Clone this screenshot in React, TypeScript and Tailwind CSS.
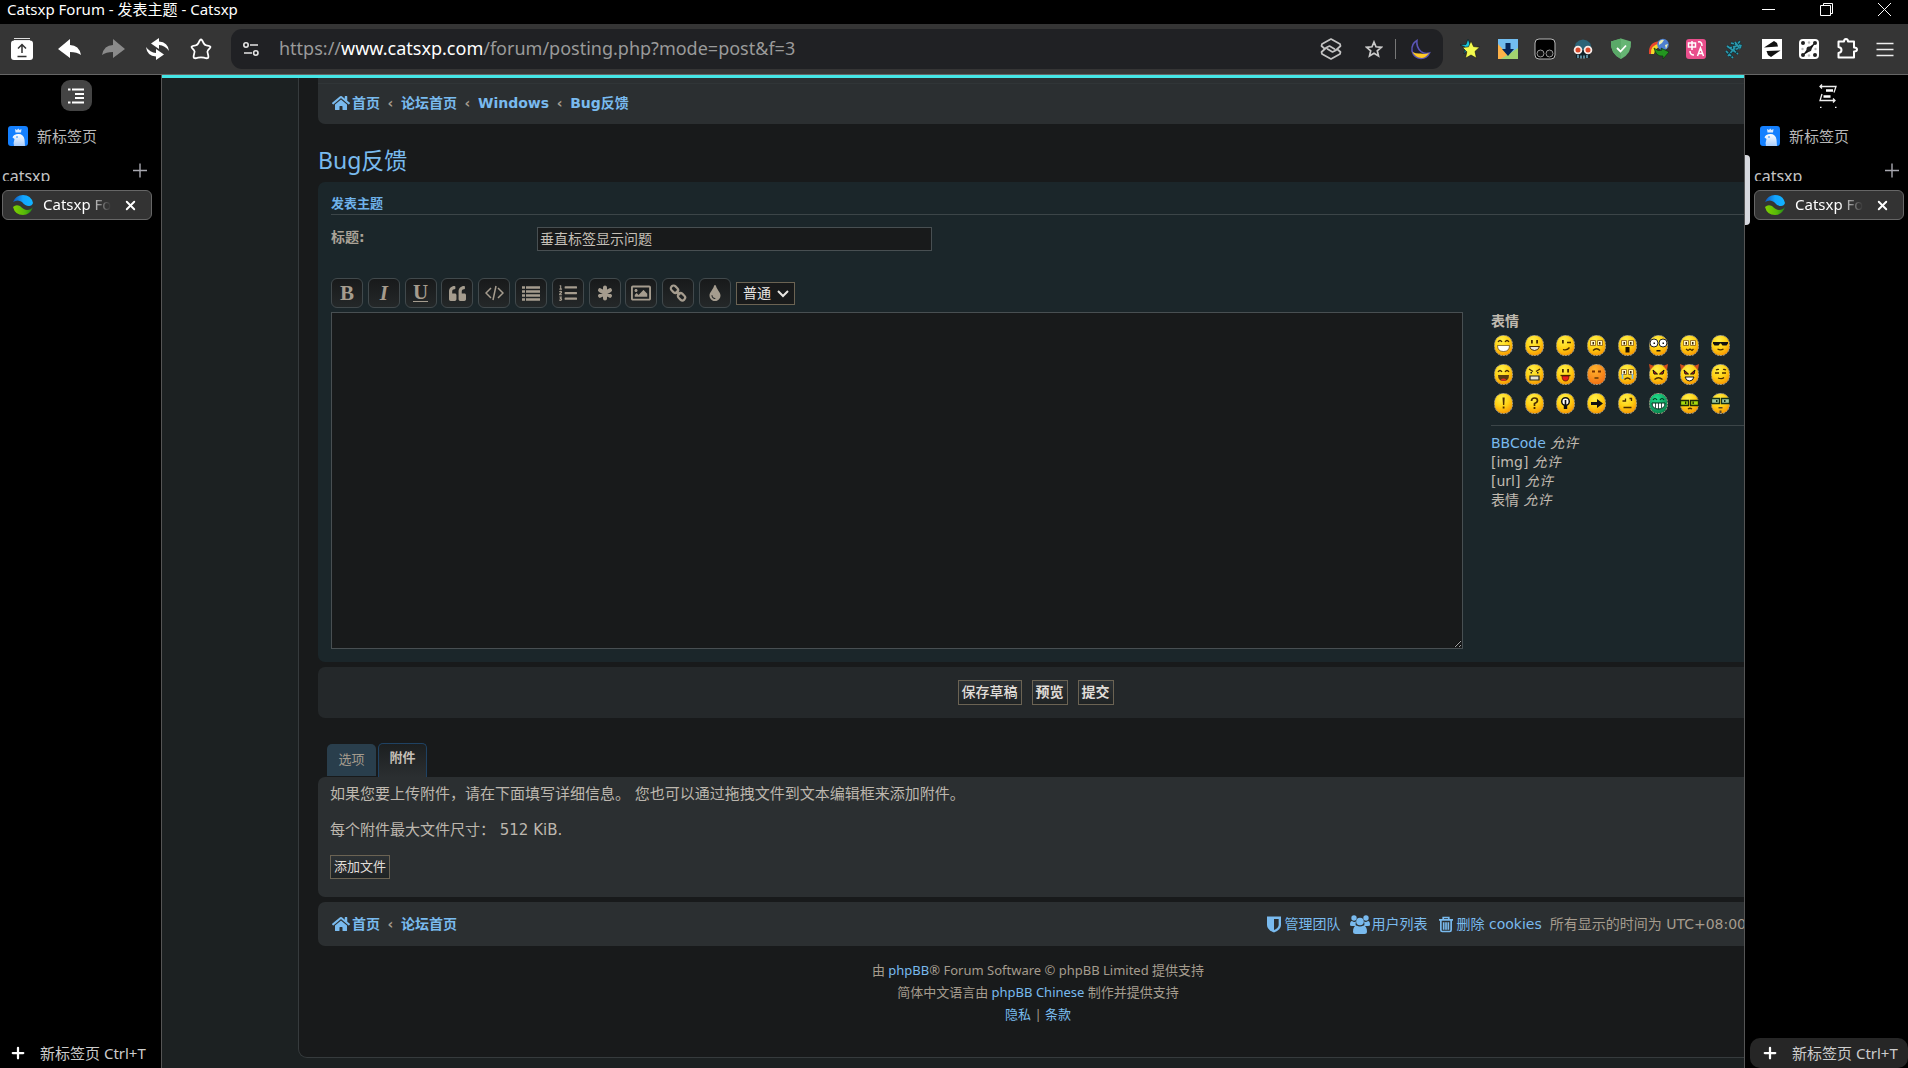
import type { ReactNode } from 'react'
import { Plus, X } from 'lucide-react'
import { FaHome, FaListOl, FaQuoteLeft, FaRegImage, FaTint } from 'react-icons/fa'

type SmileyKind =
    | 'grin' | 'smile' | 'wink' | 'sad' | 'surprised' | 'shock' | 'confused' | 'cool'
    | 'laugh' | 'mad' | 'razz' | 'blush' | 'cry' | 'evil' | 'twisted' | 'roll'
    | 'exclaim' | 'question' | 'idea' | 'arrow' | 'neutral' | 'green' | 'geek' | 'ugeek'

const smileyRows: SmileyKind[][] = [
    ['grin', 'smile', 'wink', 'sad', 'surprised', 'shock', 'confused', 'cool'],
    ['laugh', 'mad', 'razz', 'blush', 'cry', 'evil', 'twisted', 'roll'],
    ['exclaim', 'question', 'idea', 'arrow', 'neutral', 'green', 'geek', 'ugeek'],
]

const line = { fill: 'none', stroke: '#4a2c00', strokeWidth: 1.3 }
const whiteEyes = (
    <>
        <path d="M3.5 5.5h5v5h-5zM10.5 5.5h5v5h-5z" fill="#fff6c8" stroke="#8a5a10" strokeWidth=".8" />
        <path d="M5.5 7h1.5v2.5H5.5zM12 7h1.5v2.5H12z" fill="#3a2400" />
    </>
)
const dotEyes = <path d="M6 5h1.800v3.500H6zM11.200 5H13v3.500h-1.800z" fill="#4a2c00" />

const smileyFaces: Record<SmileyKind, ReactNode> = {
    grin: (
        <>
            <path d="M4 7q2-3 4 0M11 7q2-3 4 0" {...line} />
            <path d="M3.5 10.500h12q0 6-6 6t-6-6z" fill="#fff" stroke="#4a2c00" strokeWidth=".6" />
        </>
    ),
    smile: (
        <>
            {dotEyes}
            <path d="M4.5 11.5h10q-1 4-5 4t-5-4z" fill="#e9e4d4" stroke="#4a2c00" />
        </>
    ),
    wink: (
        <>
            <path d="M6 5h1.800v3.500H6z" fill="#4a2c00" />
            <path d="M11 7.5h4M7 14.500q4 1.500 6.500-2" {...line} />
        </>
    ),
    sad: (
        <>
            {whiteEyes}
            <path d="M6 15.500q3.500-3.500 7 0" {...line} />
        </>
    ),
    surprised: (
        <>
            {whiteEyes}
            <path d="M7.500 12h4v5.500h-4z" fill="#1a0f00" />
        </>
    ),
    shock: (
        <>
            <circle cx="5" cy="8" r="4" fill="#fff" stroke="#222" />
            <circle cx="14" cy="8" r="4" fill="#fff" stroke="#222" />
            <path d="M4.500 7.500h1.500v1.500H4.500zM13.500 7.500H15V9h-1.500zM7.500 15h4v1.500h-4z" fill="#111" />
        </>
    ),
    confused: (
        <>
            {whiteEyes}
            <path d="M6 14l2 1.500 2-1.500 2 1.500 1.500-1.500" {...line} />
        </>
    ),
    cool: (
        <>
            <path d="M2 7h15v1.500l-1.500 2h-4L10 8.500H9l-1.500 2h-4L2 8.500z" fill="#111" />
            <path d="M6.500 14q3 1.800 6 0" {...line} />
        </>
    ),
    laugh: (
        <>
            <path d="M4 8q2-3 4 0M11 8q2-3 4 0" {...line} />
            <path d="M4 11h11q0 6-5.500 6T4 11z" fill="#5a3a10" />
            <path d="M7 15.500q2.500-2 5 0v1.200H7z" fill="#e23020" />
        </>
    ),
    mad: (
        <>
            <path d="M4 5l4 2.500M15 5l-4 2.500" {...line} />
            <path d="M5.500 8h1.500v1.500H5.500zM12 8h1.500v1.500H12z" fill="#222" />
            <path d="M5 12h9v4H5z" fill="#e9e4d4" stroke="#222" strokeWidth="1.2" />
        </>
    ),
    razz: (
        <>
            {dotEyes}
            <path d="M4.500 11.500h10" {...line} />
            <path d="M6 12h7q0 5-3.500 5T6 12z" fill="#e8201a" stroke="#4a0c00" strokeWidth=".7" />
        </>
    ),
    blush: (
        <>
            <path d="M5 6.500h3v2H5zM11 6.500h3v2h-3z" fill="#7a3200" />
            <path d="M7.500 14h4" {...line} />
        </>
    ),
    cry: (
        <>
            {whiteEyes}
            <path d="M4.500 10v5M14.500 10v5" stroke="#79b7e8" strokeWidth="1.600" />
            <path d="M6.500 15.500q3-3 6 0" {...line} />
        </>
    ),
    evil: (
        <>
            <path d="M0 0l5 2-4 4zM19 0l-5 2 4 4z" fill="#d0501c" />
            <path d="M4 6l4.500 4H5zM15 6l-4.500 4H14z" fill="#d01010" stroke="#111" />
            <path d="M5.500 15.500q4-3.500 8 0" {...line} />
        </>
    ),
    twisted: (
        <>
            <path d="M0 0l5 2-4 4zM19 0l-5 2 4 4z" fill="#d0501c" />
            <path d="M4 6l4.500 4H5zM15 6l-4.500 4H14z" fill="#d01010" stroke="#111" />
            <path d="M5 13h9q-1 4-4.500 4T5 13z" fill="#fff" stroke="#111" />
        </>
    ),
    roll: <path d="M4 9h4M11 9h4M5 6q1.500-1 3-.500M12 5.500q1.500-.500 3 .500M7 14q4 1.500 6-.500" {...line} />,
    exclaim: <path d="M8.500 4.500h2.200L10.300 12H9zM8.700 13.500h1.800v2H8.700z" fill="#4a2c00" />,
    question: (
        <>
            <path d="M6.500 8q0-3 3-3t3 2.500q0 2-3 3V13" {...line} strokeWidth="1.700" />
            <path d="M8.600 14h1.800v2H8.600z" fill="#4a2c00" />
        </>
    ),
    idea: (
        <>
            <circle cx="9.500" cy="8.500" r="3.800" fill="#fff" stroke="#111" strokeWidth="1.500" />
            <path d="M8.700 7h1.600v6H8.700zM7.800 12h3.400v4H7.800z" fill="#111" />
        </>
    ),
    arrow: <path d="M4 9h6V6l6 4.500-6 4.500v-3H4z" fill="#111" />,
    neutral: <path d="M4.500 8h3V5.500M11.500 5.500h2V8M5.500 14.500h8" {...line} />,
    green: (
        <>
            <path d="M4 7q2-3 4 0M11 7q2-3 4 0" fill="none" stroke="#03301c" strokeWidth="1.200" />
            <path d="M3 10h13q0 6-6.500 6T3 10z" fill="#fff" stroke="#03301c" />
            <path d="M6.500 10v5M9.500 10v6M12.500 10v5" stroke="#03301c" strokeWidth=".8" />
        </>
    ),
    geek: (
        <>
            <path d="M.5 7.500h8v5h-8zM10.500 7.500h8v5h-8z" fill="#a6d80e" stroke="#1d2b05" strokeWidth="1.300" />
            <path d="M5 8.500h1.300V11H5zM12.500 8.500h1.300V11h-1.300z" fill="#1d2b05" />
            <path d="M8 16q2-1.500 4 0" {...line} />
        </>
    ),
    ugeek: (
        <>
            <path d="M.5 5.500h8v5h-8zM10.500 5.500h8v5h-8z" fill="#9cc8a0" stroke="#123018" strokeWidth="1.300" />
            <path d="M5 7h1.500v2H5zM13 7h1.500v2H13z" fill="#123018" />
            <path d="M7.500 14h4v1.500h-4zM8.500 17.500h2V20h-2z" fill="#5b4626" />
        </>
    ),
}

function Smiley({ kind }: { kind: SmileyKind }) {
    const fill = kind === 'green' ? 'url(#faceGreen)' : kind === 'blush' ? 'url(#faceOrange)' : 'url(#faceYellow)'
    return (
        <svg width="19" height="21" viewBox="0 0 19 21">
            <rect x=".5" y=".5" width="18" height="20" rx="8" ry="9" fill={fill} stroke="#a39c84" strokeDasharray="2 1" />
            {smileyFaces[kind]}
        </svg>
    )
}

function SharedGradients() {
    return (
        <svg width="0" height="0" className="absolute">
            <defs>
                <radialGradient id="faceYellow" cx=".4" cy=".25" r=".85">
                    <stop offset="0" stopColor="#fff04a" />
                    <stop offset=".5" stopColor="#ffd013" />
                    <stop offset="1" stopColor="#f58a00" />
                </radialGradient>
                <radialGradient id="faceOrange" cx=".4" cy=".25" r=".85">
                    <stop offset="0" stopColor="#ffb52e" />
                    <stop offset="1" stopColor="#f26a10" />
                </radialGradient>
                <radialGradient id="faceGreen" cx=".4" cy=".25" r=".85">
                    <stop offset="0" stopColor="#1fe08c" />
                    <stop offset="1" stopColor="#067a46" />
                </radialGradient>
                <linearGradient id="logoBlue" x1="0" x2="1">
                    <stop offset="0" stopColor="#1256b8" />
                    <stop offset=".5" stopColor="#12a4ff" />
                    <stop offset="1" stopColor="#12b4ff" />
                </linearGradient>
                <linearGradient id="logoGreen" x1="0" x2="1">
                    <stop offset="0" stopColor="#7fd000" />
                    <stop offset=".6" stopColor="#56b80a" />
                    <stop offset="1" stopColor="#1f8a1a" />
                </linearGradient>
                <linearGradient id="birdBody" x1="0" y1="0" x2="0" y2="1">
                    <stop offset="0" stopColor="#fff" />
                    <stop offset="1" stopColor="#a9cdfc" />
                </linearGradient>
            </defs>
        </svg>
    )
}

const extensions: { name: string; icon: ReactNode }[] = [
    {
        name: 'Bookmarks',
        icon: (
            <>
                <path d="M9 1l2.500 6.500L5 16l1-7L1 7l6-.500z" fill="#19c5dc" stroke="#111" strokeWidth=".6" />
                <path d="M12 3l2.600 5.600 6 .6-4.600 4.200 1.500 6.800L12 17l-5.500 3.200 1.300-6.400L3.500 9.500l6-.700z" fill="#f4fb4e" stroke="#111" strokeWidth=".6" />
            </>
        ),
    },
    {
        name: 'Downloads',
        icon: (
            <>
                <path d="M1 1h20v20H1z" fill="#72bdf0" />
                <path d="M1 6v15h3l7-4z" fill="#fdb249" />
                <path d="M21 10v11H4l8-5z" fill="#a3d36f" />
                <path d="M8.500 5h5v6H17l-6 7-6-7h3.500z" fill="#06265a" />
            </>
        ),
    },
    {
        name: 'Scripts',
        icon: (
            <>
                <rect x="1" y="1" width="20" height="20" rx="4" fill="#000" stroke="#b8b8b8" />
                <circle cx="6.500" cy="15.500" r="3.500" fill="#111" stroke="#9a9a9a" />
                <circle cx="15.500" cy="15.500" r="3.500" fill="#111" stroke="#9a9a9a" />
            </>
        ),
    },
    {
        name: 'Reader',
        icon: (
            <>
                <path d="M2.500 13q-.500-11 8.500-11.500Q20 2 19.500 13z" fill="#2c6478" />
                <path d="M4 12h14v8H4z" fill="#10212a" />
                <path d="M6 20v-3M9 20.500v-3M12 20.500v-3M15 20v-3" stroke="#8fd0e8" strokeWidth="1.200" />
                <circle cx="6" cy="12" r="3.400" fill="#d8482a" stroke="#f6ece8" strokeWidth="1.800" />
                <circle cx="16" cy="12" r="3.400" fill="#d8482a" stroke="#f6ece8" strokeWidth="1.800" />
            </>
        ),
    },
    {
        name: 'Ad blocker',
        icon: (
            <>
                <path d="M11 .5l10 3q1 12-10 17.500Q0 15.500 1 3.500z" fill="#66b574" />
                <path d="M11 .5v20.500Q0 15.500 1 3.500z" fill="#5aa968" />
                <path d="M7 10l3.500 3.500L16 7.500" fill="none" stroke="#fff" strokeWidth="1.800" />
            </>
        ),
    },
    {
        name: 'Download manager',
        icon: (
            <>
                <path d="M1 16Q0 4 12 3v3Q4 7 4 16z" fill="#e8442c" />
                <path d="M3 16Q2 7 12 5.500V9q-5 1-6 7z" fill="#f6d82a" />
                <circle cx="15" cy="6.500" r="5.800" fill="#4d7fd0" />
                <path d="M11 4q2-3 5-2l-2 3-3 2zM17 7l3-1-2 5z" fill="#e9eeb4" />
                <path d="M6 10q4 4 8 2l-1-2 8 4-6 7v-3q-7 1-9-8z" fill="#23951f" stroke="#0d3a0c" strokeWidth=".7" />
            </>
        ),
    },
    {
        name: 'Translate',
        icon: (
            <>
                <rect x="1" y="1" width="20" height="20" rx="3" fill="#e94f8c" />
                <path d="M3.500 5h7v4h-7zM7 3v9M13 4q4-1 4 4M5 13q0 4 4 4M12.500 18l3-8 3 8M13.500 15.500h4" fill="none" stroke="#fff" strokeWidth="1.500" />
            </>
        ),
    },
    {
        name: 'Inspector',
        icon: (
            <>
                <path d="M4 8l11 8M8 5l11 3M3 13l7 7M12 4l5 7M5 18l12-15M9 13l9-4M6 10l8-2" fill="none" stroke="#14343c" strokeWidth="3" />
                <path d="M4 8l11 8M8 5l11 3M3 13l7 7M12 4l5 7M5 18l12-15M9 13l9-4M6 10l8-2" fill="none" stroke="#2a9bb0" strokeWidth="1.600" strokeDasharray="3 1" />
            </>
        ),
    },
    {
        name: 'Swap',
        icon: (
            <>
                <path d="M1 1h20v20H1z" fill="#fff" />
                <path d="M3 9.500l10-6.500 3 2 1 3.500zM5.500 13l14-.500-9.500 6.500-3-2z" fill="#111" />
            </>
        ),
    },
    {
        name: 'Dice',
        icon: (
            <>
                <rect x="1" y="1" width="20" height="20" rx="4" fill="#fff" />
                <path d="M4 18l6-8 8-6-6 9z" fill="#111" />
                <g fill="#222">
                    <circle cx="5" cy="5" r="2" /><circle cx="17" cy="5" r="2" />
                    <circle cx="11" cy="11" r="2.500" /><circle cx="5" cy="17" r="2" /><circle cx="17" cy="17" r="2" />
                </g>
                <g fill="#bbb">
                    <circle cx="11" cy="4.500" r="1.200" /><circle cx="4.500" cy="11" r="1.200" />
                    <circle cx="17.500" cy="11" r="1.200" /><circle cx="11" cy="17.500" r="1.200" />
                </g>
            </>
        ),
    },
    {
        name: 'Extensions',
        icon: (
            <path d="M2.500 3.500H8q0-2.500 2-2.500t2 2.500h6v6q3 0 3 2t-3 2v6H2.500V15q3-.500 3-3t-3-3z" fill="none" stroke="#fff" strokeWidth="2" strokeLinejoin="round" />
        ),
    },
    {
        name: 'Menu',
        icon: <path d="M2.500 5.500h17M2.500 11.500h17M2.500 17.500h17" stroke="#eee" strokeWidth="1.500" />,
    },
]

function TitleBar() {
    return (
        <header className="flex h-6 shrink-0 items-start justify-between pl-[7px] pr-4 text-[15px] leading-[18px] text-white">
            <h1>Catsxp Forum - 发表主题 - Catsxp</h1>
            <div className="flex items-center gap-[43px] pt-[2px]">
                <button aria-label="Minimize"><svg width="15" height="15"><path d="M1 7.500h13" stroke="#fff" /></svg></button>
                <button aria-label="Restore">
                    <svg width="15" height="15" fill="none" stroke="#fff"><path d="M1.500 3.500h10v10h-10zM4.500 3.500v-2h9v10h-2" /></svg>
                </button>
                <button aria-label="Close"><svg width="15" height="15"><path d="M1 1l13 13M14 1L1 14" stroke="#fff" /></svg></button>
            </div>
        </header>
    )
}

function Toolbar() {
    return (
        <div className="flex h-[51px] shrink-0 items-center border-b border-[#666] bg-[#353535] text-white">
            <div className="flex w-[231px] shrink-0 items-center gap-[21px] pl-[11px]">
                <button aria-label="Open sidebar" className="mr-1">
                    <svg width="22" height="22" viewBox="0 0 22 22">
                        <path d="M3 0h16v3H3z" fill="#ddd" />
                        <path d="M3 1.500h16" stroke="#353535" />
                        <rect y="2.500" width="22" height="19.500" rx="3" fill="#fff" />
                        <path d="M11 15V7M7 10.500l4-4 4 4M6.500 18.500h9" fill="none" stroke="#333" strokeWidth="1.500" />
                    </svg>
                </button>
                <button aria-label="Back">
                    <svg width="23" height="22" viewBox="0 0 23 22" fill="#fff">
                        <path d="M0 11L12 1v6q9 0 11 10-4-3-11-3v6z" />
                    </svg>
                </button>
                <button aria-label="Forward">
                    <svg width="23" height="22" viewBox="0 0 23 22" fill="#8a8a8a">
                        <path d="M23 11L11 1v6Q2 7 0 17q4-3 11-3v6z" />
                    </svg>
                </button>
                <button aria-label="Reload">
                    <svg width="23" height="22" viewBox="0 0 23 22" fill="#fff">
                        <path d="M23 13Q22 4 13 3.500V0L5 5.500l8 5.500V7q6 .500 10 6z" />
                        <path d="M0 9q1 9 10 9.500V22l8-5.500-8-5.500v4q-6-.500-10-6z" />
                    </svg>
                </button>
                <button aria-label="Favorites">
                    <svg width="22" height="22" viewBox="0 0 22 22" fill="none" stroke="#fff" strokeWidth="1.800" strokeLinejoin="round">
                        <path d="M11 1.500q1 0 2.500 3.500 1 2 3 2.300 4 .500 4 1.700 0 .8-2.600 3.300-1 1 0 3.700 1 3.500 0 4-1 .600-4-.300-2.900-.800-5.800 0-3 .900-4 .300-1-.5 0-4 1-2.700 0-3.700Q1.500 9.800 1.500 9q0-1.200 4-1.700 2-.300 3-2.300Q10 1.500 11 1.500z" />
                    </svg>
                </button>
            </div>

            <div className="flex h-10 min-w-0 flex-1 items-center rounded-[11px] bg-[#202124]">
                <button aria-label="Site information" className="ml-3">
                    <svg width="16" height="16" viewBox="0 0 16 16" fill="none" stroke="#e4e4e4" strokeWidth="1.600">
                        <circle cx="3" cy="4" r="2.200" /><path d="M7 4h8M1 12h8" /><circle cx="12.800" cy="12" r="2.200" />
                    </svg>
                </button>
                <a href="#" className="ml-5 flex-1 truncate pb-[2px] text-[18px] leading-7 text-[#9a9a9a]">
                    https://<span className="text-white">www.catsxp.com</span>/forum/posting.php?mode=post&amp;f=3
                </a>
                <button aria-label="Layers">
                    <svg width="22" height="22" viewBox="0 0 22 22" fill="none" stroke="#c4c4c4" strokeWidth="1.700" strokeLinejoin="round" strokeLinecap="round">
                        <path d="M5 11L1.500 8 2 6l9-5 9 5 .500 2-5 4.500-3 1.500-5-3M17 11l3.500 3-.500 2-9 5-9-5-.500-2 5-4.500 3-1.500 5 3" />
                    </svg>
                </button>
                <button aria-label="Bookmark this page" className="ml-[23px]">
                    <svg width="18" height="18" viewBox="0 0 18 18" fill="none" stroke="#c9c9c9" strokeWidth="1.700">
                        <path d="M9 2l2 4.800 5.300.5-4 3.500 1.200 5.200L9 13.200 4.500 16l1.200-5.200-4-3.500L7 6.800z" />
                    </svg>
                </button>
                <span className="ml-3 h-5 w-px bg-[#777]" />
                <button aria-label="Dark mode" className="ml-[14px] mr-3">
                    <svg width="21" height="21" viewBox="0 0 21 21">
                        <path d="M7 1.500Q1 5 2 12q2 7 9 7.500 6 0 8.500-5.500-5 1.500-8.500-1.500Q6 8 7 1.500z" fill="#1f2033" stroke="#5b55b8" strokeWidth="1.500" />
                        <path d="M2.500 13q4 2 8 1.500 4.500 1 8.500-.500-3 5-7.500 5-6.500-.500-9-6z" fill="#ffc928" />
                    </svg>
                </button>
            </div>

            <div className="flex w-[465px] shrink-0 items-center justify-between pl-4 pr-3">
                {extensions.map(e => (
                    <button key={e.name} aria-label={e.name} title={e.name}>
                        <svg width="22" height="22" viewBox="0 0 22 22">{e.icon}</svg>
                    </button>
                ))}
            </div>
        </div>
    )
}

function SideTabs({ modeIcon }: { modeIcon: ReactNode }) {
    return (
        <div className="flex h-full w-[152px] flex-col">
            <div className="flex justify-center pt-[5px]">{modeIcon}</div>
            <a href="#" className="mt-[15px] flex h-5 items-center gap-[9px] pl-2 text-[15px] text-[#b9b9b9]">
                <svg width="20" height="20" viewBox="0 0 20 20">
                    <rect width="20" height="20" rx="3" fill="#1480ff" />
                    <path d="M7 3l2 1 1.200-1.500L11.500 4l2-1-.500 3.500H7.500z" fill="#dcebff" />
                    <path d="M4.500 11.500q1-3.500 6-3.500t6 5.500l.500 6.500H6q-1-3 .5-7z" fill="url(#birdBody)" />
                    <circle cx="9" cy="11" r=".8" fill="#1480ff" />
                </svg>
                新标签页
            </a>
            <div className="mt-[15px] flex h-5 items-start justify-between pl-[2px] pr-1 text-[#c4c4c4]">
                {/* the group name is cut by the row below it */}
                <span className="mt-[3px] h-[17px] overflow-hidden text-base leading-6">catsxp</span>
                <button aria-label="New tab in group">
                    <svg width="16" height="18" viewBox="0 0 16 18"><path d="M8 2.500v14M1 9.500h14" stroke="#a8a8b0" strokeWidth="1.400" /></svg>
                </button>
            </div>
            <div className="ml-[2px] mt-[9px] flex h-[30px] items-center rounded-md border border-[#666] bg-[#333] pl-[10px] text-[15px] text-white">
                <svg width="20" height="20" viewBox="0 0 20 20" className="shrink-0">
                    <path d="M0 7Q3 0 10 0q8 0 10 8-1 3-4 3-4 0-7-4Q5 4 0 7z" fill="url(#logoBlue)" />
                    <path d="M0 12q3-3 7-1 4 4 7 4 4 0 6-3-3 8-10 8-8-0-10-8z" fill="url(#logoGreen)" />
                </svg>
                <a href="#" className="ml-[10px] w-[68px] overflow-hidden whitespace-nowrap pb-[2px] [mask-image:linear-gradient(to_right,#000_65%,transparent)]">Catsxp Forum</a>
                <button aria-label="Close tab" className="ml-3"><X size={15} strokeWidth={3} /></button>
            </div>
        </div>
    )
}

const treeIcon = (
    <button aria-label="Vertical tabs" className="flex size-[31px] items-center justify-center rounded-[9px] bg-[#444]">
        <svg width="16" height="16" viewBox="0 0 16 16" stroke="#fff" strokeWidth="2">
            <path d="M0 1.500h2.500M4 1.500h12M7 6h9M7 10h9M0 14.500h2.500M4 14.500h12" />
        </svg>
    </button>
)

const swapIcon = (
    <button aria-label="Switch tab side" className="flex size-[31px] items-center justify-center">
        <svg width="18" height="25" viewBox="0 0 18 25" fill="none" stroke="#eee" strokeWidth="1.300">
            <path d="M1 3.500h16l-2 6M3 1.500l-2 2 2 2M3 11l-2 6.500h15M14 15.500l2 2-2 2" />
            <path d="M7 7.500h7M4.500 13.500h7" stroke="#fff" strokeWidth="2.500" />
            <path d="M1 24.500h1.500M16 24.500h1.500" />
        </svg>
    </button>
)

function NewTabButton({ raised }: { raised?: boolean }) {
    return (
        <button className={raised
            ? 'mt-auto flex h-[30px] items-center gap-[13px] rounded-[10px] bg-[#262626] pl-[11px] text-[15px] text-[#ccc]'
            : 'mt-auto flex h-[30px] items-center gap-[13px] pl-[9px] text-[15px] text-[#ccc]'}
        >
            <Plus size={18} strokeWidth={3} className="text-white" />
            新标签页 Ctrl+T
        </button>
    )
}

function Breadcrumbs({ items }: { items: string[] }) {
    return (
        <ul className="flex items-center font-bold text-[#79baee]">
            {items.map((label, i) => (
                <li key={label} className="flex items-center">
                    {i > 0 && <span className="w-[21px] text-center text-[#a59c8e]">‹</span>}
                    <a href="#" className="flex items-center gap-[2px]">
                        {i === 0 && <FaHome size={18} />}
                        {label}
                    </a>
                </li>
            ))}
        </ul>
    )
}

const formatButtons: { name: string; icon: ReactNode }[] = [
    { name: '粗体', icon: <span className="font-bold">B</span> },
    { name: '斜体', icon: <span className="font-bold italic">I</span> },
    { name: '下划线', icon: <span className="border-b border-[#a59c8e] font-bold leading-[17px]">U</span> },
    { name: '引用', icon: <FaQuoteLeft size={17} /> },
    {
        name: '代码',
        icon: (
            <svg width="19" height="16" viewBox="0 0 19 16" fill="none" stroke="currentColor" strokeWidth="1.500">
                <path d="M6 3L1 8l5 5M13 3l5 5-5 5M11 1L8 15" />
            </svg>
        ),
    },
    {
        name: '列表',
        icon: (
            <svg width="18" height="15" viewBox="0 0 18 15" stroke="currentColor" strokeWidth="2.500">
                <path d="M0 1.500h3M4 1.500h14M0 5.500h3M4 5.500h14M0 9.500h3M4 9.500h14M0 13.500h3M4 13.500h14" />
            </svg>
        ),
    },
    { name: '编号列表', icon: <FaListOl size={18} /> },
    {
        name: '列表项',
        icon: (
            <svg width="16" height="16" viewBox="0 0 16 16" stroke="currentColor" strokeWidth="4" strokeLinecap="round">
                <path d="M8 2.500v11M3 5.200l10 5.600M13 5.200L3 10.800" />
            </svg>
        ),
    },
    { name: '图片', icon: <FaRegImage size={20} /> },
    {
        name: '链接',
        icon: (
            <svg width="18" height="18" viewBox="0 0 18 18" fill="none" stroke="currentColor" strokeWidth="2.200">
                <rect x="1.500" y="2.500" width="8" height="5.500" rx="2.700" transform="rotate(45 5.500 5.200)" />
                <rect x="8.500" y="10" width="8" height="5.500" rx="2.700" transform="rotate(45 12.500 12.700)" />
                <path d="M7 7l4 4" />
            </svg>
        ),
    },
    { name: '颜色', icon: <FaTint size={16} /> },
]

const formButton = 'border border-[#6b6353] bg-linear-to-b from-[#2d3235] to-[#1f2324] px-[3px] text-[#e0ddd8]'

function PostingPanel() {
    return (
        <section className="rounded-[7px] bg-[#1b262a] px-[13px] pb-[13px] pt-3">
            <h3 className="border-b border-[#3c4548] text-[13px] font-bold leading-5 text-[#6fb2ea]">发表主题</h3>
            <div className="mt-3 flex">
                <label htmlFor="subject" className="w-[206px] font-bold leading-5 text-[#aaa297]">标题:</label>
                <input
                    id="subject"
                    defaultValue="垂直标签显示问题"
                    className="h-6 w-[395px] border border-[#484f52] bg-[#181a1b] px-[2px] pb-[2px] text-[#c4bfb6]"
                />
            </div>

            <div className="mt-[27px] flex items-center gap-[5px]">
                <div className="flex w-[400px] justify-between">
                    {formatButtons.map(b => (
                        <button
                            key={b.name}
                            aria-label={b.name}
                            title={b.name}
                            className="flex h-[30px] w-8 items-center justify-center rounded-[6px] border border-[#41494c] bg-linear-to-b from-[#181a1b] to-[#242829] font-['Liberation_Serif',serif] text-[21px] text-[#a59c8e]"
                        >
                            {b.icon}
                        </button>
                    ))}
                </div>
                <div className="relative">
                    <select aria-label="字体大小" className="block h-[23px] w-[59px] appearance-none border border-[#6b6353] bg-[#181a1b] pl-[6px] text-[#e8e6e3]">
                        <option>普通</option>
                    </select>
                    <svg width="12" height="8" viewBox="0 0 12 8" className="pointer-events-none absolute right-[6px] top-2">
                        <path d="M1 1l5 5 5-5" fill="none" stroke="#e8e6e3" strokeWidth="2" />
                    </svg>
                </div>
            </div>

            <div className="mt-1 flex gap-7">
                <textarea aria-label="正文" className="h-[337px] min-w-0 flex-1 border border-[#484f52] bg-[#181a1b] p-1 text-[#c4bfb6] [color-scheme:dark]" />
                <aside className="w-[254px] shrink-0 leading-[19px] text-[#c0bab0]">
                    <strong className="block">表情</strong>
                    {smileyRows.map(row => (
                        <div key={row[0]} className="flex h-[29px] items-center gap-3 pl-[3px]">
                            {row.map(kind => (
                                <a key={kind} href="#" aria-label={kind}><Smiley kind={kind} /></a>
                            ))}
                        </div>
                    ))}
                    <div className="mt-[7px] border-t border-[#3c4548] pt-2">
                        <p><a href="#" className="text-[#79baee]">BBCode</a> <em>允许</em></p>
                        <p>[img] <em>允许</em></p>
                        <p>[url] <em>允许</em></p>
                        <p>表情 <em>允许</em></p>
                    </div>
                </aside>
            </div>
        </section>
    )
}

function ForumPage() {
    return (
        <div className="ml-[136px] w-[calc(100%-102px)] rounded-b-[9px] border border-t-0 border-[#363b3d] bg-[#181a1b] px-[19px] pb-8 font-['DejaVu_Sans','Noto_Sans_CJK_SC',sans-serif] text-sm">
            <nav className="flex h-[46px] flex-col rounded-b-[7px] bg-[#2b2f31]">
                <div className="h-[6px] border-b border-[#303537]" />
                <div className="flex flex-1 items-center px-[14px] pb-[2px]">
                    <Breadcrumbs items={['首页', '论坛首页', 'Windows', 'Bug反馈']} />
                </div>
            </nav>

            <h2 className="mb-[5px] mt-[19px] font-['Noto_Sans','Noto_Sans_CJK_SC',sans-serif] text-[23px] leading-[34px] text-[#79baee]">Bug反馈</h2>

            <PostingPanel />

            <div className="mt-[5px] flex justify-center gap-[10px] rounded-[7px] bg-[#24282a] py-[13px] pr-[5px]">
                <button className={`${formButton} h-[25px] pb-[2px] font-medium`}>保存草稿</button>
                <button className={`${formButton} h-[25px] pb-[2px] font-bold`}>预览</button>
                <button className={`${formButton} h-[25px] pb-[2px] font-bold`}>提交</button>
            </div>

            <div className="mt-[25px] flex gap-[2px] pl-[9px] text-[13px]">
                <button className="mt-px h-8 w-[49px] rounded-t-[5px] bg-[#293e4c] text-[#a59c8e]">选项</button>
                <button className="h-[34px] w-[49px] rounded-t-[5px] border border-b-0 border-[#1f4263] bg-linear-to-b from-[#1c1f20] to-[#2b2f31] pb-1 font-bold text-[#c4bfb6]">附件</button>
            </div>
            <section className="rounded-[7px] bg-[#2b2f31] px-3 pb-[18px] pt-[6px] text-[15px] leading-[22px] text-[#bdb7ae]">
                <p>如果您要上传附件，请在下面填写详细信息。 您也可以通过拖拽文件到文本编辑框来添加附件。</p>
                <p className="mt-[14px]">每个附件最大文件尺寸： 512 KiB.</p>
                <button className={`${formButton} mt-[14px] block h-6 text-[13px] leading-5`}>添加文件</button>
            </section>

            <div className="mt-[5px] flex h-11 items-center justify-between rounded-[7px] bg-[#2b2f31] pl-[14px] pr-3">
                <Breadcrumbs items={['首页', '论坛首页']} />
                <ul className="flex items-center whitespace-nowrap text-[#79baee]">
                    <li>
                        <a href="#" className="flex items-center gap-1">
                            <svg width="14" height="17" viewBox="0 0 15 17">
                                <path d="M0 0h15v9q0 5-7.500 8Q0 14 0 9z" fill="currentColor" />
                                <path d="M7.500 2.500H12.500V9q0 3-5 5.500z" fill="#2b2f31" />
                            </svg>
                            管理团队
                        </a>
                    </li>
                    <li className="ml-[9px]">
                        <a href="#" className="flex items-center gap-[2px]">
                            <svg width="20" height="19" viewBox="0 0 20 19" fill="currentColor">
                                <circle cx="4" cy="3" r="2.700" /><circle cx="16" cy="3" r="2.700" />
                                <path d="M0 10q0-4 2-4 2 1.500 4 .500-1 3 0 4.500H2q-2 0-2-1zM20 10q0-4-2-4-2 1.500-4 .500 1 3 0 4.500h4q2 0 2-1z" />
                                <circle cx="10" cy="6.500" r="3.800" />
                                <path d="M3 17q0-6 3.500-6.500 3.500 2 7 0Q17 11 17 17q0 2-2.500 2h-9Q3 19 3 17z" />
                            </svg>
                            用户列表
                        </a>
                    </li>
                    <li className="ml-[11px]">
                        <a href="#" className="flex items-center gap-1">
                            <svg width="14" height="17" viewBox="0 0 15 17" fill="none" stroke="currentColor" strokeWidth="1.800">
                                <path d="M0 3.500h15M4.500 3V1h6v2M2 4v10.500q0 1.500 1.500 1.500h8q1.500 0 1.500-1.500V4M5 6v8M7.500 6v8M10 6v8" />
                            </svg>
                            删除 cookies
                        </a>
                    </li>
                    <li className="ml-2 text-[#a59c8e]">所有显示的时间为 UTC+08:00</li>
                </ul>
            </div>

            <footer className="mt-[13px] text-center font-['Noto_Sans','Noto_Sans_CJK_SC',sans-serif] text-[13px] leading-[22px] text-[#a59c8e]">
                <p>由 <a href="#" className="text-[#79baee]">phpBB</a>® Forum Software © phpBB Limited 提供支持</p>
                <p>简体中文语言由 <a href="#" className="text-[#79baee]">phpBB Chinese</a> 制作并提供支持</p>
                <p><a href="#" className="text-[#79baee]">隐私</a> | <a href="#" className="text-[#79baee]">条款</a></p>
            </footer>
        </div>
    )
}

export default function App() {
    return (
        <div className="flex h-screen flex-col overflow-hidden bg-black font-['Noto_Sans','Noto_Sans_CJK_SC',sans-serif]">
            <SharedGradients />
            <TitleBar />
            <Toolbar />
            <div className="flex min-h-0 flex-1">
                <aside className="flex w-[162px] shrink-0 flex-col border-r border-[#555]">
                    <SideTabs modeIcon={treeIcon} />
                    <NewTabButton />
                </aside>
                <main className="min-w-0 flex-1 overflow-hidden bg-[#1c2122]">
                    <div className="h-[3px] bg-[#45e6e6]" />
                    <ForumPage />
                </main>
                <aside className="relative flex w-[164px] shrink-0 flex-col border-l border-[#555]">
                    <div className="absolute left-0 top-20 h-[70px] w-[5px] rounded-r-[4px] bg-[#d6d8de]" />
                    <div className="min-h-0 flex-1 pl-[7px]">
                        <SideTabs modeIcon={swapIcon} />
                    </div>
                    <div className="flex flex-col pl-[5px]">
                        <NewTabButton raised />
                    </div>
                </aside>
            </div>
        </div>
    )
}
